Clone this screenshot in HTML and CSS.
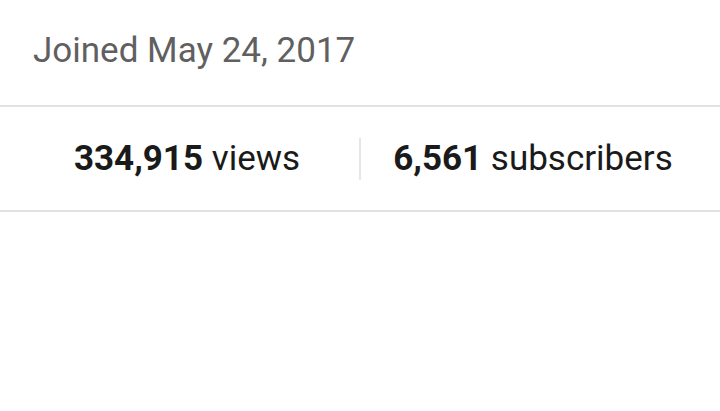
FILE: index.html
```html
<!DOCTYPE html>
<html>
<head>
<meta charset="utf-8">
<link rel="stylesheet" href="styles.css">
</head>
<body>
<div class="joined">Joined May 24, 2017</div>
<div class="stats">
  <div class="stat"><b>334,915</b> views</div>
  <div class="divider"></div>
  <div class="stat"><b>6,561</b> subscribers</div>
</div>
</body>
</html>
```
FILE: styles.css
```css
html, body {
  margin: 0;
  padding: 0;
  background: #ffffff;
  font-family: Roboto, "Noto Sans", sans-serif;
}
.joined {
  height: 105px;
  box-sizing: border-box;
  padding: 31px 0 0 33px;
  font-size: 35px;
  line-height: 40px;
  color: #606060;
}
.stats {
  display: flex;
  align-items: center;
  height: 107px;
  box-sizing: border-box;
  border-top: 2px solid #e2e2e2;
  border-bottom: 2px solid #e2e2e2;
  padding: 0 15px;
}
.stat {
  flex: 1;
  text-align: center;
  font-size: 35px;
  color: #1a1a1a;
  line-height: 40px;
}
.stat b {
  font-weight: 700;
}
.divider {
  width: 2px;
  height: 42px;
  background: #e6e6e6;
}
```
